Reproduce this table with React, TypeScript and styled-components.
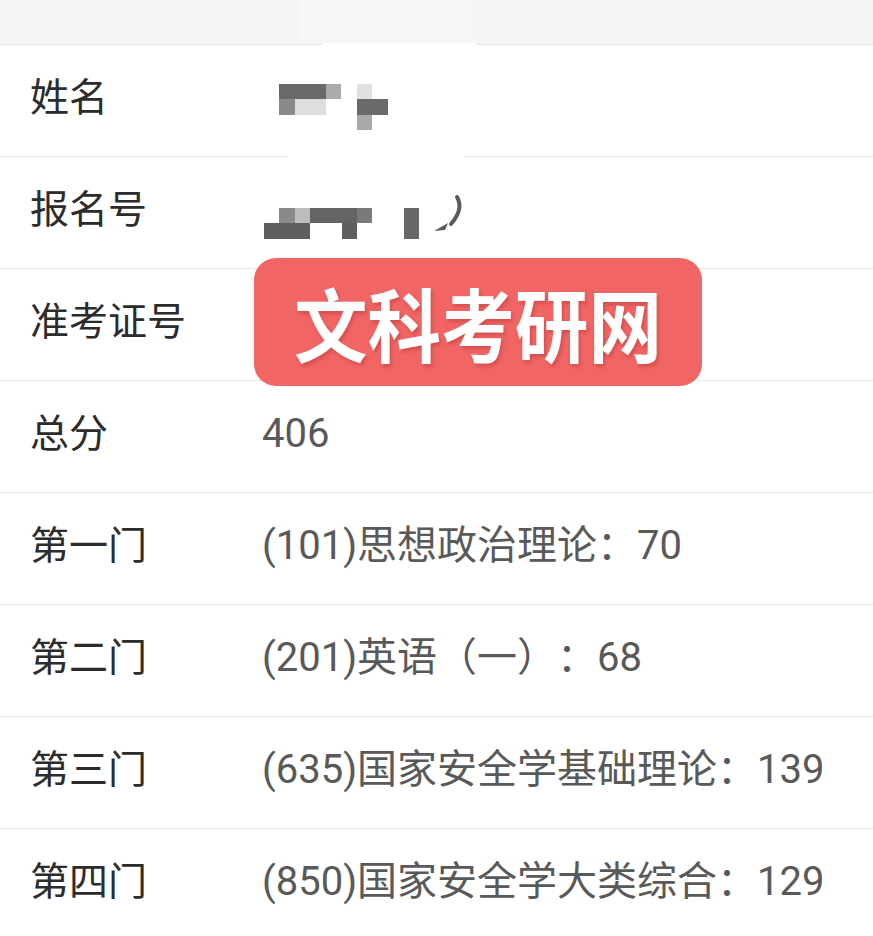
import React from 'react'
import styled, { createGlobalStyle } from 'styled-components'

const GlobalStyle = createGlobalStyle`
  html, body {
    margin: 0;
    padding: 0;
    background: #ffffff;
  }
`

const Page = styled.div`
  position: relative;
  width: 873px;
  height: 936px;
  overflow: hidden;
  background: #ffffff;
  font-family: Roboto, "Noto Sans CJK SC", "Noto Sans", sans-serif;
`

const TopBar = styled.div`
  height: 44px;
  background: #f5f5f5;
  border-bottom: 1px solid #e4e4e4;
`

const Row = styled.div`
  display: grid;
  grid-template-columns: 232px 1fr;
  align-items: center;
  height: 111px;
  padding-left: 30px;
  border-bottom: 1px solid #e7e7e7;
`

const Label = styled.div`
  font-size: 39px;
  line-height: 1;
  color: #2c2c2c;
  padding-bottom: 5px;
`

const Value = styled.div`
  font-size: 40px;
  line-height: 1;
  color: #595959;
  padding-bottom: 5px;
  white-space: nowrap;
  text-spacing-trim: space-all;
`

const Mosaic = styled.svg`
  display: block;
  align-self: stretch;
`

const Watermark = styled.div`
  position: absolute;
  left: 254px;
  top: 258px;
  width: 448px;
  height: 128px;
  border-radius: 22px;
  background: #f26565;
  display: flex;
  align-items: center;
  justify-content: center;
`

const WatermarkText = styled.span`
  font-family: "Noto Sans CJK SC", sans-serif;
  font-weight: 700;
  font-size: 80px;
  line-height: 1;
  color: #ffffff;
  transform: scaleX(0.92);
  text-shadow: 2px 3px 4px rgba(150, 30, 30, 0.3);
  margin-top: -2px;
`

// white retouch patches left over from the mosaic editing
const Patch = styled.div<{ x: number; y: number; w: number; h: number; bg?: string }>`
  position: absolute;
  left: ${({ x }) => x}px;
  top: ${({ y }) => y}px;
  width: ${({ w }) => w}px;
  height: ${({ h }) => h}px;
  background: ${({ bg }) => bg || '#ffffff'};
`

type Block = [number, number, number, number, string]

const nameBlocks: Block[] = [
    [17, 39, 47, 15, '#6a6a6a'],
    [64, 39, 15, 15, '#ababab'],
    [17, 54, 16, 16, '#8a8a8a'],
    [33, 54, 31, 16, '#dedede'],
    [95, 39, 15, 15, '#e0e0e0'],
    [95, 54, 31, 16, '#6a6a6a'],
    [95, 70, 15, 15, '#a9a9a9'],
]

const numberBlocks: Block[] = [
    [17, 51, 16, 15, '#8a8a8a'],
    [33, 51, 15, 15, '#bdbdbd'],
    [48, 51, 47, 15, '#646464'],
    [95, 51, 15, 15, '#7a7a7a'],
    [2, 66, 46, 16, '#5e5e5e'],
    [80, 66, 15, 16, '#5e5e5e'],
    [142, 51, 15, 31, '#676767'],
]

function Blocks({ blocks, children }: { blocks: Block[]; children?: React.ReactNode }) {
    return (
        <Mosaic width="240" height="111" viewBox="0 0 240 111">
            {blocks.map(([x, y, w, h, fill], i) => (
                <rect key={i} x={x} y={y} width={w} height={h} fill={fill} />
            ))}
            {children}
        </Mosaic>
    )
}

const rows: { label: string; value: string }[] = [
    { label: '总分', value: '406' },
    { label: '第一门', value: '(101)思想政治理论：70' },
    { label: '第二门', value: '(201)英语（一）：68' },
    { label: '第三门', value: '(635)国家安全学基础理论：139' },
    { label: '第四门', value: '(850)国家安全学大类综合：129' },
]

export default function App() {
    return (
        <>
            <GlobalStyle />
            <Page>
                <TopBar />
                <Row>
                    <Label>姓名</Label>
                    <Blocks blocks={nameBlocks} />
                </Row>
                <Row>
                    <Label>报名号</Label>
                    <Blocks blocks={numberBlocks}>
                        <path d="M195 40 Q202 52 189 67" stroke="#5a5a5a" strokeWidth="4" fill="none" strokeLinecap="round" />
                        <polygon points="172,74 186,66 183,73" fill="#5a5a5a" />
                    </Blocks>
                </Row>
                <Row>
                    <Label>准考证号</Label>
                    <Value />
                </Row>
                {rows.map((r) => (
                    <Row key={r.label}>
                        <Label>{r.label}</Label>
                        <Value>{r.value}</Value>
                    </Row>
                ))}

                <Patch x={300} y={0} w={173} h={44} bg="#f7f7f7" />
                <Patch x={323} y={43} w={153} h={4} />
                <Patch x={287} y={153} w={177} h={7} />

                <Watermark>
                    <WatermarkText>文科考研网</WatermarkText>
                </Watermark>
            </Page>
        </>
    )
}
